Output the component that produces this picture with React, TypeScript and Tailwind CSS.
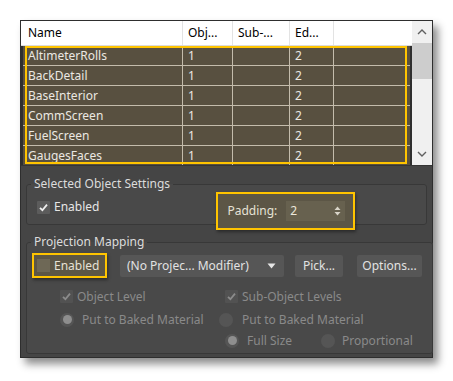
import React from 'react';

const rows = ['AltimeterRolls', 'BackDetail', 'BaseInterior', 'CommScreen', 'FuelScreen', 'GaugesFaces'];

const font = { fontFamily: '"Noto Sans", "Open Sans", sans-serif' };

const Check: React.FC<{ checked?: boolean; disabled?: boolean }> = ({ checked, disabled }) => (
  <span
    className={`w-[13px] h-[13px] flex items-center justify-center rounded-[1px] ${
      disabled ? 'bg-[#525252]' : 'bg-[#5c5c5c]'
    }`}
  >
    {checked && (
      <svg width="9" height="9" viewBox="0 0 9 9">
        <path
          d="M1 4.8 L3.4 7.2 L8 1.6"
          fill="none"
          stroke={disabled ? '#8c8c8c' : '#f0f0f0'}
          strokeWidth="1.8"
        />
      </svg>
    )}
  </span>
);

const Radio: React.FC<{ checked?: boolean }> = ({ checked }) => (
  <span className="w-[14px] h-[14px] rounded-full bg-[#555555] flex items-center justify-center">
    {checked && <span className="w-[9px] h-[9px] rounded-full bg-[#8e8e8e]" />}
  </span>
);

export default function App() {
  return (
    <div className="w-[453px] h-[381px] bg-white pt-[20px] pl-[20px]" style={font}>
      <div className="w-[413px] h-[338px] bg-[#454545] border border-[#2e2e2e] shadow-[5px_6px_8px_rgba(0,0,0,0.45)] flex flex-col">
        {/* List */}
        <div className="h-[144px] flex bg-white overflow-hidden">
          <div className="flex-1 flex flex-col relative">
            <div className="h-[25px] flex text-[12px] text-black border-b border-[#dcdcdc]">
              <div className="w-[162px] pl-[7px] flex items-center border-r border-[#e3e3e3]">Name</div>
              <div className="w-[50px] pl-[5px] flex items-center border-r border-[#e3e3e3]">Obj...</div>
              <div className="w-[57px] pl-[5px] flex items-center border-r border-[#e3e3e3]">Sub-...</div>
              <div className="w-[44px] pl-[5px] flex items-center border-r border-[#e3e3e3]">Ed...</div>
              <div className="flex-1" />
            </div>
            <div className="flex-1 bg-[#2f2f2f] pl-[2px] pr-[2px] overflow-hidden">
              {rows.map((r) => (
                <div key={r} className="h-[20px] flex bg-[#585040] text-[12px] text-[#ebe8e2] border-b border-[#c4bcac]">
                  <div className="w-[160px] pl-[5px] flex items-center border-r border-[#c4bcac]">{r}</div>
                  <div className="w-[50px] pl-[5px] flex items-center border-r border-[#c4bcac]">1</div>
                  <div className="w-[57px] border-r border-[#c4bcac]" />
                  <div className="w-[44px] pl-[5px] flex items-center border-r border-[#c4bcac]">2</div>
                  <div className="flex-1" />
                </div>
              ))}
            </div>
            <div className="absolute left-[4px] top-[25px] w-[382px] h-[118px] border-2 border-[#ffc400] pointer-events-none" />
          </div>
          <div className="w-[20px] bg-[#f0f0f0] flex flex-col items-center">
            <div className="h-[22px] flex items-center justify-center">
              <svg width="10" height="6" viewBox="0 0 10 6">
                <path d="M1 5 L5 1 L9 5" fill="none" stroke="#606060" strokeWidth="1.4" />
              </svg>
            </div>
            <div className="w-[20px] h-[36px] bg-[#cdcdcd]" />
            <div className="flex-1" />
            <div className="h-[22px] flex items-center justify-center">
              <svg width="10" height="6" viewBox="0 0 10 6">
                <path d="M1 1 L5 5 L9 1" fill="none" stroke="#606060" strokeWidth="1.4" />
              </svg>
            </div>
          </div>
        </div>
        <div className="h-[1px] bg-[#353535]" />

        {/* Settings */}
        <div className="flex-1 px-[5px] pt-[10px] flex flex-col gap-[9px] text-[12px]">
          <fieldset className="border border-[#383838] rounded-[3px] h-[49px] px-[10px] bg-[#494949]">
            <legend className="px-[3px] -ml-[6px] text-[#dcdcdc] leading-[16px]">Selected Object Settings</legend>
            <div className="flex items-center h-[30px]">
              <label className="flex items-center gap-[4px] text-[#e6e6e6]">
                <Check checked />
                Enabled
              </label>
              <div className="ml-[117px] mt-[8px] w-[139px] h-[38px] border-2 border-[#ffc400] bg-[#5c5646] flex items-center pl-[9px] shadow-[1px_2px_3px_rgba(0,0,0,0.4)]">
                <span className="text-[#e6e2d6]">Padding:</span>
                <div className="ml-[9px] w-[59px] h-[20px] bg-[#67614f] flex items-center justify-between pl-[4px] pr-[4px] text-[#ece8dc]">
                  2
                  <svg width="7" height="10" viewBox="0 0 7 10">
                    <path d="M3.5 0.5 L6.5 4 L0.5 4 Z M3.5 9.5 L6.5 6 L0.5 6 Z" fill="#d8d4c8" />
                  </svg>
                </div>
              </div>
            </div>
          </fieldset>

          <fieldset className="border border-[#383838] rounded-[3px] h-[120px] px-[10px] mr-[1px] bg-[#494949]">
            <legend className="px-[3px] -ml-[6px] text-[#dcdcdc] leading-[16px]">Projection Mapping</legend>
            <div className="flex items-center h-[31px] -ml-[5px]">
              <label className="w-[75px] h-[25px] border-2 border-[#ffc400] bg-[#5c5646] flex items-center pl-[3px] gap-[4px] text-[#e6e2d6] shadow-[1px_2px_3px_rgba(0,0,0,0.4)]">
                <span className="w-[13px] h-[13px] bg-[#6e6856]" />
                Enabled
              </label>
              <div className="ml-[13px] w-[164px] h-[22px] bg-[#565656] rounded-[2px] flex items-center pl-[7px] pr-[8px] justify-between text-[#e2e2e2]">
                (No Projec... Modifier)
                <svg width="9" height="6" viewBox="0 0 9 6">
                  <path d="M0.5 0.5 L8.5 0.5 L4.5 5.5 Z" fill="#e6e6e6" />
                </svg>
              </div>
              <div className="ml-[11px] w-[48px] h-[22px] bg-[#565656] rounded-[2px] flex items-center justify-center text-[#e2e2e2]">Pick...</div>
              <div className="ml-[14px] w-[65px] h-[22px] bg-[#565656] rounded-[2px] flex items-center justify-center text-[#e2e2e2]">Options...</div>
            </div>
            <div className="text-[#8a8a8a] pt-[4px]">
              <div className="flex items-center h-[23px] pl-[23px]">
                <label className="w-[165px] flex items-center gap-[4px]">
                  <Check checked disabled />
                  Object Level
                </label>
                <label className="flex items-center gap-[4px]">
                  <Check checked disabled />
                  Sub-Object Levels
                </label>
              </div>
              <div className="flex items-center h-[23px] pl-[23px]">
                <label className="w-[159px] flex items-center gap-[8px]">
                  <Radio checked />
                  Put to Baked Material
                </label>
                <label className="flex items-center gap-[9px]">
                  <Radio />
                  Put to Baked Material
                </label>
              </div>
              <div className="flex items-center h-[19px] pl-[188px]">
                <label className="w-[96px] flex items-center gap-[8px]">
                  <Radio checked />
                  Full Size
                </label>
                <label className="flex items-center gap-[7px]">
                  <Radio />
                  Proportional
                </label>
              </div>
            </div>
          </fieldset>
        </div>
      </div>
    </div>
  );
}
